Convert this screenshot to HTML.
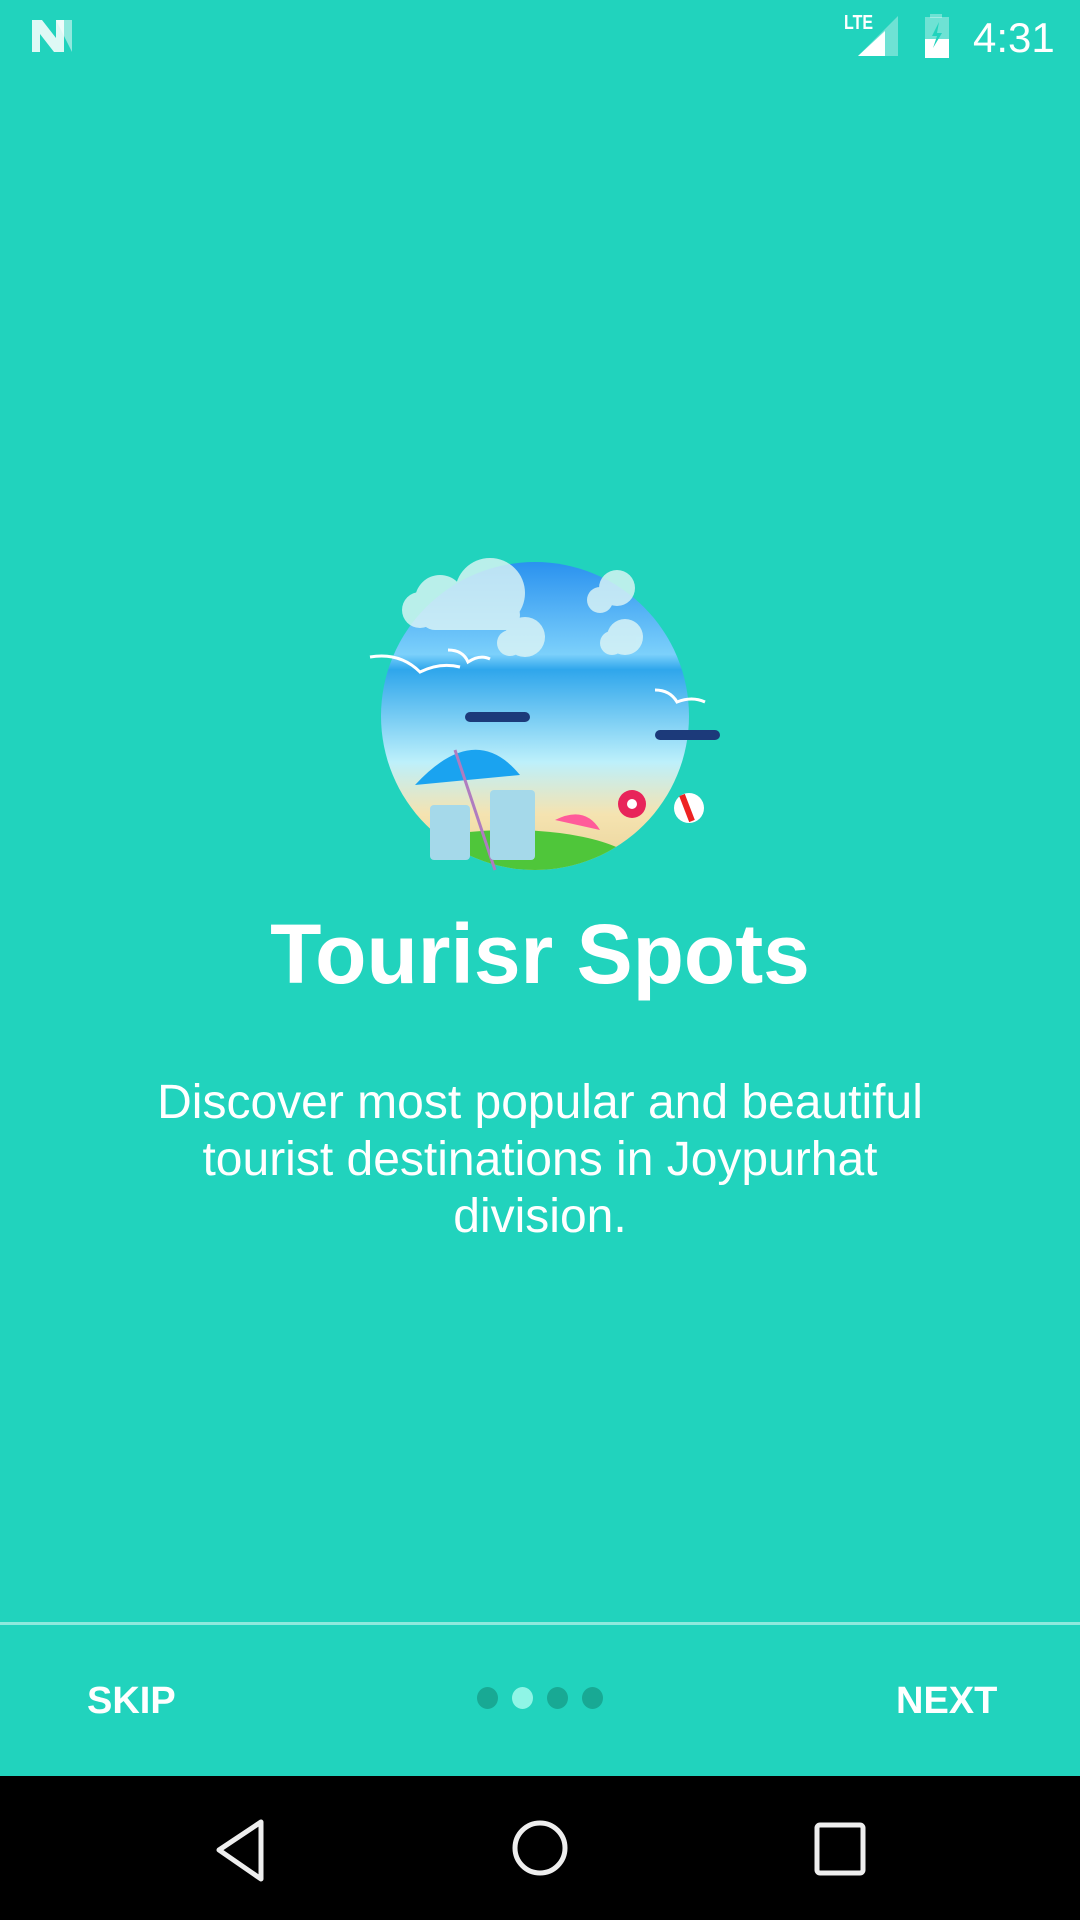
<!DOCTYPE html>
<html><head><style>
body{margin:0;width:1080px;height:1920px;background:#21D3BD;position:relative;overflow:hidden;font-family:"Liberation Sans",Roboto,sans-serif;color:#fff}
.abs{position:absolute}
</style></head><body>
<!-- status bar -->
<svg class="abs" style="left:30px;top:18px" width="46" height="36" viewBox="0 0 46 36"><path d="M2 2h10l14 18V2h8v32H24L10 16v18H2z" fill="#fff" opacity=".85"/><path d="M26 2h16v32z" fill="#fff" opacity=".5"/></svg>
<div class="abs" style="left:844px;top:12px;font-size:20px;font-weight:bold;transform:scaleX(.8);transform-origin:left">LTE</div>
<svg class="abs" style="left:855px;top:14px" width="45" height="44"><path d="M43 2V42H3z" fill="#fff" opacity=".35"/><path d="M30 17V42H3z" fill="#fff"/></svg>
<svg class="abs" style="left:922px;top:14px" width="30" height="44"><rect x="8" y="0" width="12" height="4" fill="#fff" opacity=".35"/><rect x="3" y="3" width="24" height="23" fill="#fff" opacity=".35"/><rect x="3" y="25" width="24" height="19" fill="#fff"/><path d="M17 8l-7 14h5l-4 12 9-15h-5z" fill="#21D3BD"/></svg>
<div class="abs" style="left:973px;top:14px;font-size:42px">4:31</div>

<!-- illustration -->
<svg class="abs" style="left:360px;top:540px" width="370" height="340" viewBox="0 0 370 340">
<defs><linearGradient id="g" x1="0" y1="0" x2="0" y2="1"><stop offset="0" stop-color="#2a92ef"/><stop offset=".3" stop-color="#7cd0fb"/><stop offset=".35" stop-color="#2fa6ec"/><stop offset=".65" stop-color="#bdf0fb"/><stop offset=".82" stop-color="#f5e3b0"/><stop offset="1" stop-color="#e9d39b"/></linearGradient><clipPath id="c"><circle cx="175" cy="176" r="154"/></clipPath></defs>
<circle cx="175" cy="176" r="154" fill="url(#g)"/>
<g clip-path="url(#c)"><ellipse cx="150" cy="330" rx="130" ry="40" fill="#4fc63a"/></g>
<g fill="#dff6f6" opacity=".8"><circle cx="130" cy="53" r="35"/><circle cx="80" cy="60" r="25"/><circle cx="60" cy="70" r="18"/><rect x="60" y="60" width="100" height="30" rx="15"/><circle cx="257" cy="48" r="18"/><circle cx="240" cy="60" r="13"/><circle cx="165" cy="97" r="20"/><circle cx="150" cy="103" r="13"/><circle cx="265" cy="97" r="18"/><circle cx="252" cy="103" r="12"/></g>
<g fill="none" stroke="#fff" stroke-width="3"><path d="M10 117q30-5 50 15q20-10 40-5"/><path d="M88 110q15 0 20 12q12-8 22-3"/><path d="M295 150q15 0 22 12q15-6 28 0"/></g>
<rect x="105" y="172" width="65" height="10" rx="5" fill="#1c3a7a"/><rect x="295" y="190" width="65" height="10" rx="5" fill="#1c3a7a"/>
<path d="M55 245q60-65 105-10z" fill="#1aa3f0"/><path d="M95 210l40 120" stroke="#b07cc0" stroke-width="3"/>
<g fill="#a5d9ea"><rect x="70" y="265" width="40" height="55" rx="4"/><rect x="130" y="250" width="45" height="70" rx="4"/></g>
<circle cx="272" cy="264" r="14" fill="#e8245a"/><circle cx="272" cy="264" r="5" fill="#fff"/>
<circle cx="329" cy="268" r="15" fill="#fff"/><path d="M322 255l10 26" stroke="#e22" stroke-width="6"/>
<path d="M195 280q30-15 45 10z" fill="#ff5b9a"/>
</svg>

<div class="abs" style="left:0;width:1080px;top:906px;text-align:center;font-size:84px;font-weight:bold">Tourisr Spots</div>
<div class="abs" style="left:130px;width:820px;top:1074px;text-align:center;font-size:48px;line-height:57px">Discover most popular and beautiful tourist destinations in Joypurhat division.</div>

<!-- bottom bar -->
<div class="abs" style="left:0;top:1622px;width:1080px;height:3px;background:#8ee9dd"></div>
<div class="abs" style="left:87px;top:1680px;font-size:38px;font-weight:bold">SKIP</div>
<div class="abs" style="left:896px;top:1680px;font-size:38px;font-weight:bold">NEXT</div>
<div class="abs" style="left:477px;top:1687px;width:21px;height:22px;border-radius:50%;background:#18a994"></div>
<div class="abs" style="left:512px;top:1687px;width:21px;height:22px;border-radius:50%;background:#8ff5e6"></div>
<div class="abs" style="left:547px;top:1687px;width:21px;height:22px;border-radius:50%;background:#18a994"></div>
<div class="abs" style="left:582px;top:1687px;width:21px;height:22px;border-radius:50%;background:#18a994"></div>

<!-- nav bar -->
<div class="abs" style="left:0;top:1776px;width:1080px;height:144px;background:#000"></div>
<svg class="abs" style="left:0;top:1776px" width="1080" height="144" fill="none" stroke="#eee" stroke-width="5" stroke-linejoin="round">
<path d="M261 46V103L219 74z"/><circle cx="540" cy="72" r="25"/><rect x="817" y="49" width="46" height="48" rx="3"/>
</svg>
</body></html>
